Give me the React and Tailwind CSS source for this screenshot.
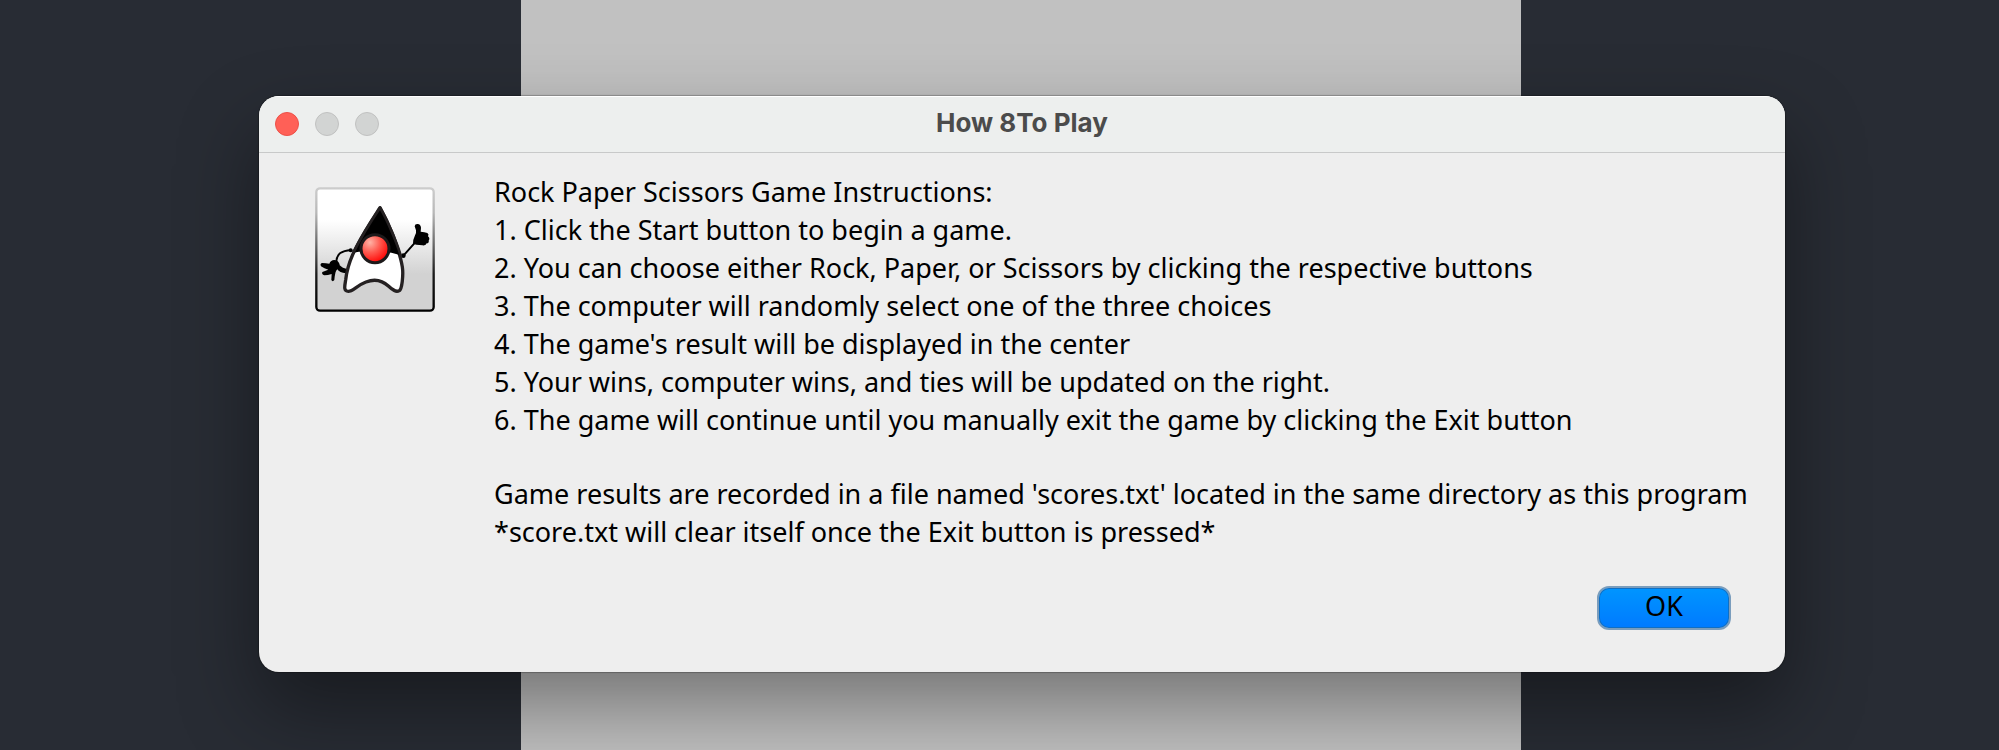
const steps = [
  "1. Click the Start button to begin a game.",
  "2. You can choose either Rock, Paper, or Scissors by clicking the respective buttons",
  "3. The computer will randomly select one of the three choices",
  "4. The game's result will be displayed in the center",
  "5. Your wins, computer wins, and ties will be updated on the right.",
  "6. The game will continue until you manually exit the game by clicking the Exit button",
];

function DukeIcon() {
  return (
    <svg
      viewBox="45 36 360 375"
      className="mt-[14px] h-[125px] w-[120px] shrink-0"
      role="img"
      aria-label="Duke, the Java mascot"
    >
      <defs>
        <linearGradient id="tile" x1="0" y1="0" x2="0" y2="1">
          <stop offset="0" stopColor="#ffffff" />
          <stop offset="0.26" stopColor="#ffffff" />
          <stop offset="0.7" stopColor="#d2d2d2" />
          <stop offset="1" stopColor="#d2d2d2" />
        </linearGradient>
        <linearGradient id="frame" x1="0" y1="0" x2="0" y2="1">
          <stop offset="0" stopColor="#cccccc" />
          <stop offset="0.2" stopColor="#b8b8b8" />
          <stop offset="0.7" stopColor="#1c1c1c" />
          <stop offset="1" stopColor="#000000" />
        </linearGradient>
        <radialGradient id="nose" cx="0.32" cy="0.28" r="0.8">
          <stop offset="0" stopColor="#ffb3a6" />
          <stop offset="0.45" stopColor="#ff5a50" />
          <stop offset="0.85" stopColor="#ff1512" />
          <stop offset="1" stopColor="#e00000" />
        </radialGradient>
      </defs>
      <rect x="49" y="40" width="352" height="367" rx="11" fill="url(#tile)" stroke="url(#frame)" strokeWidth="7" />
      <path d="M154 225 C125 228 110 234 109 262" fill="none" stroke="#000" strokeWidth="6" strokeLinecap="round" />
      <path d="M117 278 C122 285 128 287 138 288" fill="none" stroke="#000" strokeWidth="14" strokeLinecap="round" />
      <circle cx="152" cy="226" r="6" />
      <path
        d="M88 266 C92 254 104 252 112 258 C122 266 121 278 112 283 C106 288 106 296 104 305 L103 315 Q98 322 94 315 L95 297 Q84 301 73 301 Q64 298 67 291 L85 284 Q73 281 63 274 Q59 266 66 264 Q78 264 88 266 Z"
        fill="#000"
      />
      <path d="M311 241 L345 203" fill="none" stroke="#000" strokeWidth="6" strokeLinecap="round" />
      <circle cx="310" cy="242" r="7" />
      <path
        d="M339 206 Q338 196 344 184 Q350 175 348 166 L344 154 Q345 146 353 147 Q362 148 363 158 L362 170 Q374 171 382 174 Q388 178 384 184 Q391 190 386 197 Q388 204 380 205 Q378 213 367 211 L349 209 Z"
        fill="#000"
      />
      <path
        d="M240 98 C222 126 195 166 171 212 C153 246 140 286 137 315 C134 333 130 349 145 349 C159 349 171 331 198 321 C224 311 248 317 266 334 C278 345 288 353 298 347 C307 340 309 301 308 285 C306 256 292 216 278 178 C266 148 250 116 240 98 Z"
        fill="#ffffff"
        stroke="#252122"
        strokeWidth="10"
        strokeLinejoin="round"
      />
      <path d="M240 98 C218 131 186 180 160 233 Q190 227 224 232 Q265 227 302 241 C289 198 260 132 240 98 Z" fill="#000" />
      <path d="M240 98 C218 131 186 180 160 233 M302 241 C289 198 260 132 240 98" fill="none" stroke="#252122" strokeWidth="8" strokeLinecap="round" />
      <circle cx="225" cy="221" r="42" fill="url(#nose)" stroke="#1c191a" strokeWidth="9" />
    </svg>
  );
}

function TitleBar({ title }) {
  return (
    <header className="grid h-[57px] grid-cols-[1fr_auto_1fr] items-center border-b border-[#c8c9c9] bg-[#edefee] px-4 shadow-[inset_0_1px_0_#ffffff]">
      <div className="flex gap-4">
        <button type="button" aria-label="Close" className="size-6 rounded-full border border-[#ec5048] bg-[#ff6057]" />
        <button type="button" aria-label="Minimize" disabled className="size-6 rounded-full border border-[#c0c1c0] bg-[#d2d4d3]" />
        <button type="button" aria-label="Zoom" disabled className="size-6 rounded-full border border-[#c0c1c0] bg-[#d2d4d3]" />
      </div>
      <h1 id="dialog-title" className="pb-0.5 font-['Inter',sans-serif] text-[26px] leading-8 font-bold text-[#4b4b4b]">
        {title}
      </h1>
    </header>
  );
}

export default function App() {
  return (
    <main className="grid min-h-screen grid-cols-1 overflow-hidden bg-[#282c34] pl-[45px]">
      <div className="col-start-1 row-start-1 mr-0.5 w-[1000px] max-w-full justify-self-center bg-[#c1c1c1]" />
      <section
        role="dialog"
        aria-labelledby="dialog-title"
        className="z-10 col-start-1 row-start-1 mt-24 w-[1526px] max-w-full self-start justify-self-center overflow-hidden rounded-[20px] bg-[#eeeeee] shadow-[0_0_1px_1px_rgba(0,0,0,0.25),0_36px_80px_rgba(0,0,0,0.4)]"
      >
        <TitleBar title="How 8To Play" />
        <div className="flex gap-[59px] pt-5 pr-6 pl-14">
          <DukeIcon />
          <div className="font-['Noto_Sans',sans-serif] text-[27px] leading-[38px] text-black">
            <p>Rock Paper Scissors Game Instructions:</p>
            <ol>
              {steps.map((step) => (
                <li key={step}>{step}</li>
              ))}
            </ol>
            <p className="mt-9">
              Game results are recorded in a file named 'scores.txt' located in the same directory as this program
            </p>
            <p>*score.txt will clear itself once the Exit button is pressed*</p>
          </div>
        </div>
        <div className="flex justify-end px-[54px] pt-[35px] pb-[42px]">
          <button
            type="button"
            className="h-11 w-[134px] rounded-xl border-2 border-[#7a9dbd] bg-linear-to-b from-[#0095ff] to-[#007aff] pb-1 font-['Noto_Sans',sans-serif] text-[27px] leading-9 text-black shadow-[inset_0_0_0_1px_#0f6fc4]"
          >
            OK
          </button>
        </div>
      </section>
    </main>
  );
}
